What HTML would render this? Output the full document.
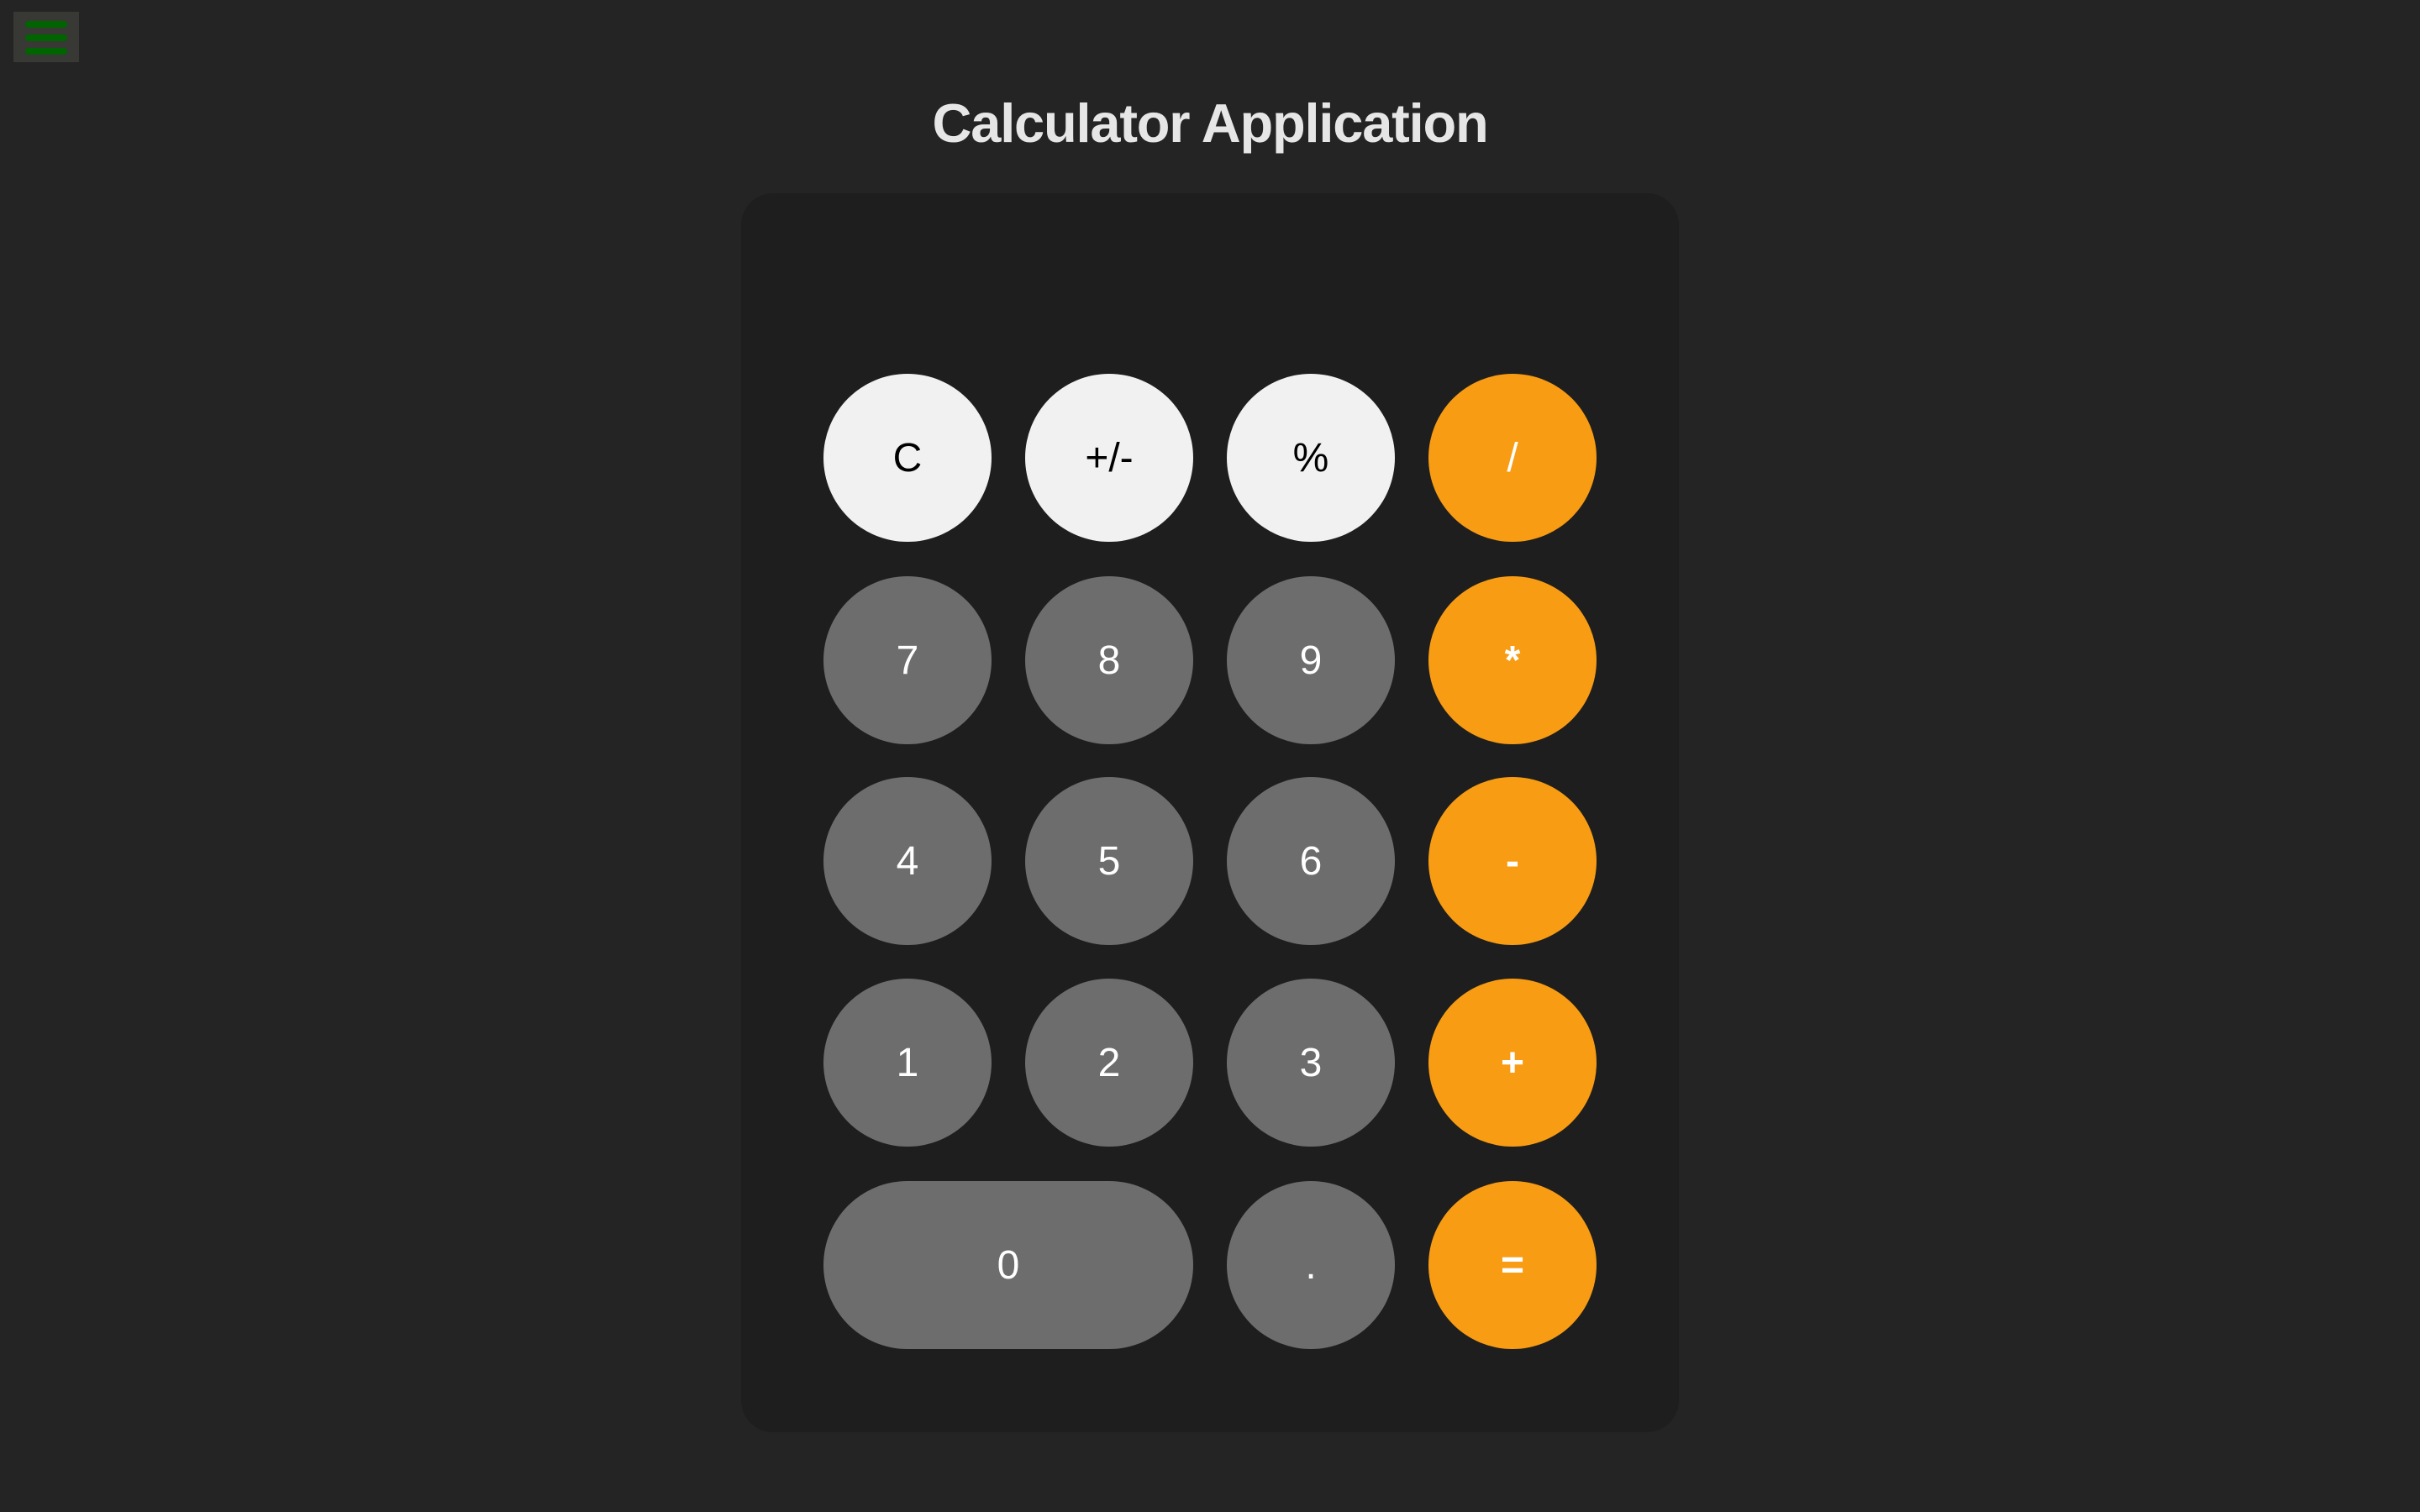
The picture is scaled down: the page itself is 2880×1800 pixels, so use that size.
<!DOCTYPE html>
<html><head><style>
html,body{margin:0;padding:0;}
body{width:2880px;height:1800px;background:#242424;position:relative;overflow:hidden;font-family:"Liberation Sans",sans-serif;}
.menu{position:absolute;left:16px;top:14px;width:78px;height:60px;background:#383835;}
.menu i{position:absolute;left:14px;width:50px;height:8px;border-radius:4px;background:#006400;}
h1{position:absolute;left:0;width:2880px;top:102px;margin:0;text-align:center;color:#e6e6e6;font-size:65px;font-weight:bold;line-height:90px;letter-spacing:-1.2px;}
.panel{position:absolute;left:882px;top:230px;width:1116px;height:1475px;background:#1e1e1e;border-radius:38px;}
.b{position:absolute;width:200px;height:200px;border-radius:100px;display:flex;align-items:center;justify-content:center;font-size:48px;color:#fff;background:#6d6d6d;}
.l{background:#f1f1f1;color:#000;}
.o{background:#f89c14;font-weight:bold;}
</style></head><body>
<div class="menu"><i style="top:11px"></i><i style="top:27px"></i><i style="top:43px"></i></div>
<h1>Calculator Application</h1>
<div class="panel"></div>
<div class="b l" style="left:980px;top:445px">C</div>
<div class="b l" style="left:1220px;top:445px">+/-</div>
<div class="b l" style="left:1460px;top:445px">%</div>
<div class="b o" style="left:1700px;top:445px;font-weight:normal">/</div>
<div class="b" style="left:980px;top:686px">7</div>
<div class="b" style="left:1220px;top:686px">8</div>
<div class="b" style="left:1460px;top:686px">9</div>
<div class="b o" style="left:1700px;top:686px">*</div>
<div class="b" style="left:980px;top:925px">4</div>
<div class="b" style="left:1220px;top:925px">5</div>
<div class="b" style="left:1460px;top:925px">6</div>
<div class="b o" style="left:1700px;top:925px">-</div>
<div class="b" style="left:980px;top:1165px">1</div>
<div class="b" style="left:1220px;top:1165px">2</div>
<div class="b" style="left:1460px;top:1165px">3</div>
<div class="b o" style="left:1700px;top:1165px">+</div>
<div class="b" style="left:980px;top:1406px;width:440px">0</div>
<div class="b" style="left:1460px;top:1406px">.</div>
<div class="b o" style="left:1700px;top:1406px">=</div>
</body></html>
